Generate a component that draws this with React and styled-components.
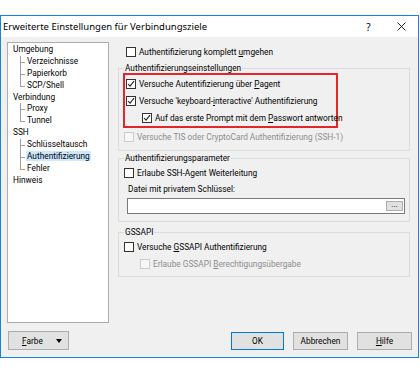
import React from 'react';
import styled, { createGlobalStyle } from 'styled-components';

const GlobalStyle = createGlobalStyle`
  html, body {
    margin: 0;
    padding: 0;
    background: #ffffff;
  }
  body {
    font-family: Roboto, "Noto Sans", sans-serif;
    font-size: 8.3px;
    color: #000;
  }
  * { box-sizing: border-box; }
`;

const tree = [
  { label: 'Umgebung', level: 0 },
  { label: 'Verzeichnisse', level: 1 },
  { label: 'Papierkorb', level: 1 },
  { label: 'SCP/Shell', level: 1, last: true },
  { label: 'Verbindung', level: 0 },
  { label: 'Proxy', level: 1 },
  { label: 'Tunnel', level: 1, last: true },
  { label: 'SSH', level: 0 },
  { label: 'Schlüsseltausch', level: 1 },
  { label: 'Authentifizierung', level: 1, selected: true },
  { label: 'Fehler', level: 1, last: true },
  { label: 'Hinweis', level: 0 },
];

function CheckBox({ checked, disabled }) {
  return (
    <Box $disabled={disabled}>
      {checked && (
        <svg width="8" height="8" viewBox="0 0 8 8">
          <polyline points="1,4 3,6.2 7,1.2" fill="none" stroke="#222" strokeWidth="1.1" />
        </svg>
      )}
    </Box>
  );
}

function CheckRow({ checked, disabled, indent, children }) {
  return (
    <Row $indent={indent} $disabled={disabled}>
      <CheckBox checked={checked} disabled={disabled} />
      <span>{children}</span>
    </Row>
  );
}

export default function App() {
  return (
    <>
      <GlobalStyle />
      <Window>
        <TitleBar>
          <Title>Erweiterte Einstellungen für Verbindungsziele</Title>
          <TitleButton>?</TitleButton>
          <TitleButton>
            <svg width="9" height="9" viewBox="0 0 9 9">
              <path d="M0.5 0.5 L8.5 8.5 M8.5 0.5 L0.5 8.5" stroke="#222" strokeWidth="1" />
            </svg>
          </TitleButton>
        </TitleBar>
        <Body>
          <Tree>
            {tree.map(item => (
              <TreeItem key={item.label} $level={item.level} $last={item.last}>
                <TreeLabel $selected={item.selected}>{item.label}</TreeLabel>
              </TreeItem>
            ))}
          </Tree>
          <Content>
            <TopRow>
              <CheckRow>
                Authentifizierung komplett <u>u</u>mgehen
              </CheckRow>
            </TopRow>

            <Group>
              <Legend>Authentifizierungseinstellungen</Legend>
              <Highlight>
                <CheckRow checked>
                  Versuche Autentifizierung über <u>P</u>agent
                </CheckRow>
                <CheckRow checked>
                  Versuche 'keyboard-<u>i</u>nteractive' Authentifizierung
                </CheckRow>
                <CheckRow checked indent>
                  Auf das erste Prompt mit dem <u>P</u>asswort antworten
                </CheckRow>
              </Highlight>
              <CheckRow disabled>
                Versuche TIS oder CryptoCard Authentifizierung (SSH-1)
              </CheckRow>
            </Group>

            <Group $gap={1} $bottom={7}>
              <Legend>Authentifizierungsparameter</Legend>
              <CheckRow>Erlaube SSH-Agent Weiterleitung</CheckRow>
              <FieldLabel>Datei mit privatem Schlüssel:</FieldLabel>
              <FileInput>
                <BrowseButton>...</BrowseButton>
              </FileInput>
            </Group>

            <Group $gap={4} $bottom={4}>
              <Legend>GSSAPI</Legend>
              <CheckRow>
                Versuche <u>G</u>SSAPI Authentifizierung
              </CheckRow>
              <CheckRow disabled indent>
                Erlaube GSSAPI <u>B</u>erechtigungsübergabe
              </CheckRow>
            </Group>
          </Content>
          <Footer>
            <ColorButton>
              <span><u>F</u>arbe</span>
              <Caret />
            </ColorButton>
            <Spacer />
            <Button $default>OK</Button>
            <Button>Abbrechen</Button>
            <Button><u>H</u>ilfe</Button>
          </Footer>
        </Body>
      </Window>
    </>
  );
}

const Window = styled.div`
  margin-top: 15px;
  width: 419px;
  height: 343px;
  border: 1px solid #1883d7;
  display: flex;
  flex-direction: column;
  background: #f0f0f0;
`;

const TitleBar = styled.div`
  height: 21px;
  background: #fff;
  display: flex;
  align-items: center;
  padding: 0 0 0 2px;
`;

const Title = styled.div`
  flex: 1;
  font-family: "Noto Sans", sans-serif;
  font-size: 9.5px;
`;

const TitleButton = styled.div`
  width: 33px;
  text-align: center;
  font-family: "Noto Sans", sans-serif;
  font-size: 10px;
  display: flex;
  justify-content: center;
  align-items: center;
`;

const Body = styled.div`
  flex: 1;
  display: grid;
  grid-template-columns: 102px 1fr;
  grid-template-rows: 281px 1fr;
  column-gap: 9px;
  padding: 5px 6px 0 6px;
`;

const Tree = styled.div`
  background: #fff;
  border: 1px solid #adadad;
  padding: 1px 0 0 4px;
`;

const TreeItem = styled.div`
  position: relative;
  height: 11.9px;
  line-height: 11.9px;
  padding-left: ${p => (p.$level ? 14 : 0)}px;

  ${p =>
    p.$level
      ? `
    &::before {
      content: '';
      position: absolute;
      left: 8px;
      top: 0;
      height: ${p.$last ? '6px' : '11.9px'};
      border-left: 1px solid #a0a0a0;
    }
    &::after {
      content: '';
      position: absolute;
      left: 8px;
      top: 6px;
      width: 5px;
      border-top: 1px solid #a0a0a0;
    }
  `
      : ''}
`;

const TreeLabel = styled.span`
  padding: 0 1px;
  background: ${p => (p.$selected ? '#cce8ff' : 'transparent')};
`;

const Content = styled.div`
  display: flex;
  flex-direction: column;
  padding-right: 2px;
  padding-top: 1px;
`;

const TopRow = styled.div`
  padding-left: 7px;
`;

const Row = styled.div`
  height: 17px;
  display: flex;
  align-items: center;
  gap: 3px;
  padding-left: ${p => (p.$indent ? 17 : 1)}px;
  color: ${p => (p.$disabled ? '#8d8d8d' : '#000')};
  white-space: nowrap;
  & u { text-decoration-thickness: 1px; text-underline-offset: 1px; }
`;

const Box = styled.span`
  width: 10px;
  height: 10px;
  flex: none;
  border: 1px solid ${p => (p.$disabled ? '#cccccc' : '#333333')};
  background: ${p => (p.$disabled ? '#f7f7f7' : '#fff')};
  display: flex;
  align-items: center;
  justify-content: center;
`;

const Group = styled.fieldset`
  margin: ${p => p.$gap ?? 2}px 0 0 0;
  padding: 0 4px ${p => p.$bottom ?? 5}px 4px;
  border: 1px solid #dcdcdc;
  min-width: 0;
`;

const Legend = styled.legend`
  padding: 0 1px;
  margin-left: 1px;
  line-height: 12px;
`;

const Highlight = styled.div`
  width: 215px;
  border: 2px solid #e3262b;
  margin-top: -1px;
`;

const FieldLabel = styled.div`
  height: 17px;
  line-height: 17px;
  padding-left: 5px;
`;

const FileInput = styled.div`
  margin: 0 0 0 4px;
  height: 16px;
  background: #fff;
  border: 1px solid #7a7a7a;
  display: flex;
  justify-content: flex-end;
  align-items: center;
  padding-right: 1px;
`;

const BrowseButton = styled.div`
  width: 17px;
  height: 10px;
  background: #e1e1e1;
  border: 1px solid #adadad;
  font-size: 8px;
  line-height: 5px;
  text-align: center;
`;

const Footer = styled.div`
  grid-column: 1 / -1;
  display: flex;
  align-items: flex-start;
  gap: 9px;
  padding-top: 8px;
  padding-right: 0;
`;

const Spacer = styled.div`
  flex: 1;
`;

const Button = styled.div`
  width: ${p => (p.$default ? 53 : 55)}px;
  height: 18px;
  margin-top: 1px;
  background: #e1e1e1;
  border: 1px solid ${p => (p.$default ? '#0078d7' : '#adadad')};
  display: flex;
  align-items: center;
  justify-content: center;
`;

const ColorButton = styled.div`
  width: 61px;
  height: 19px;
  margin-left: 1px;
  background: #e1e1e1;
  border: 1px solid #adadad;
  display: flex;
  align-items: center;
  justify-content: space-between;
  padding: 0 6px 0 13px;
`;

const Caret = styled.span`
  width: 0;
  height: 0;
  border-left: 3.5px solid transparent;
  border-right: 3.5px solid transparent;
  border-top: 4px solid #000;
`;
